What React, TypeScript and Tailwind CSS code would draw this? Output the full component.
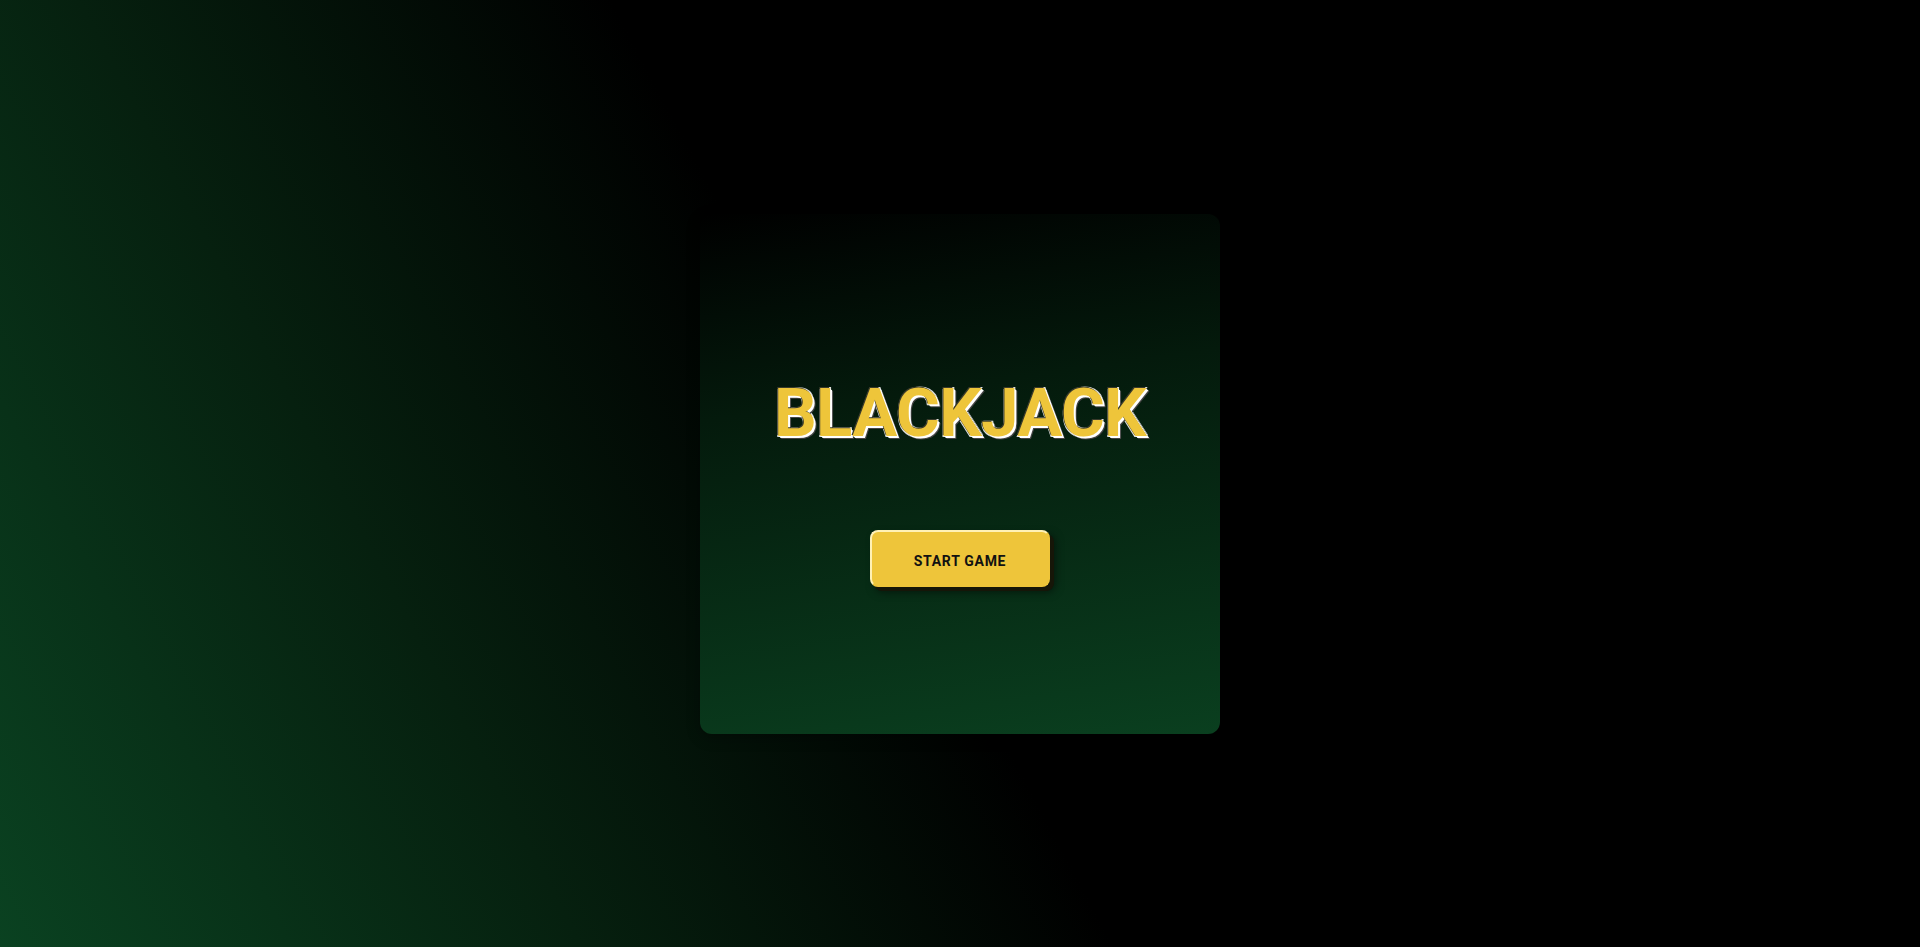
import React from 'react';

const App: React.FC = () => {
  return (
    <div className="min-h-screen w-full flex items-center justify-center bg-[linear-gradient(62deg,#0a4221_0%,#06200f_24%,#000000_46%,#000000_100%)] font-['Roboto',sans-serif]">
      <div className="w-[520px] h-[520px] rounded-xl bg-[linear-gradient(172deg,#000000_0%,#041a0c_35%,#0a3f1f_100%)] shadow-[0_4px_14px_rgba(0,0,0,0.3)] flex flex-col items-center justify-center pt-5">
        <h1 className="text-[67px] leading-none font-bold text-[#eec53a] tracking-[-0.01em] [text-shadow:-1px_-1px_0_#3a3a2a,1px_1px_0_#fff,2px_2px_0_#fff,3px_3px_0_#444,-1px_1px_0_#ddd,1px_-1px_0_#ddd]">
          BLACKJACK
        </h1>
        <button className="mt-[83px] w-[180px] h-[57px] pt-[5px] rounded-lg bg-[#eec53a] border-2 border-t-[#fff1b5] border-l-[#fff1b5] border-r-[#eec53a] border-b-[#eec53a] shadow-[4px_4px_0_#161608,5px_5px_8px_rgba(0,0,0,0.5)] text-[14px] font-bold tracking-[0.05em] text-[#111111]">
          START GAME
        </button>
      </div>
    </div>
  );
};

export default App;
